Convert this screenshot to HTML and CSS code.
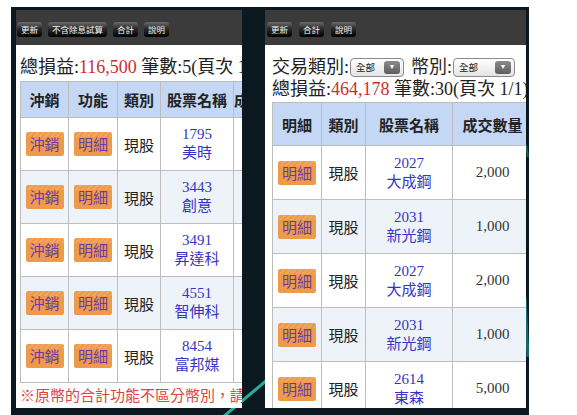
FILE: index.html
```html
<!DOCTYPE html>
<html lang="zh-Hant">
<head>
    <meta charset="UTF-8">
    <meta name="viewport" content="width=device-width, initial-scale=1.0">
    <title>庫存損益</title>
    <link rel="stylesheet" href="styles.css">
</head>
<body>
    <div class="stage">
        <!-- background streaks behind the two screens -->
        <svg class="backdrop" width="518" height="408" viewBox="0 0 518 408">
            <path d="M212 410 L262 368" stroke="#2fc4b0" stroke-width="3" fill="none" opacity="0.85"/>
            <path d="M514 290 L517 350" stroke="#1d8f86" stroke-width="3" fill="none" opacity="0.7"/>
            <path d="M515 138 L517 150" stroke="#1d8f86" stroke-width="2" fill="none" opacity="0.6"/>
        </svg>

        <!-- left screen -->
        <div class="panel panel-left">
            <div class="toolbar">
                <span class="tbtn">更新</span>
                <span class="tbtn">不含除息試算</span>
                <span class="tbtn">合計</span>
                <span class="tbtn">說明</span>
            </div>
            <div class="summary">總損益:<span class="red">116,500</span> 筆數:5(頁次 1/1)</div>
            <table class="grid grid-left">
                <colgroup>
                    <col style="width:48px"><col style="width:49px"><col style="width:43px"><col style="width:73px"><col style="width:60px">
                </colgroup>
                <tr class="head"><th>沖銷</th><th>功能</th><th>類別</th><th>股票名稱</th><th>成交數量</th></tr>
                <tr><td><span class="act">沖銷</span></td><td><span class="act">明細</span></td><td>現股</td><td class="stock">1795<br>美時</td><td class="qty">1,000</td></tr>
                <tr class="alt"><td><span class="act">沖銷</span></td><td><span class="act">明細</span></td><td>現股</td><td class="stock">3443<br>創意</td><td class="qty">1,000</td></tr>
                <tr><td><span class="act">沖銷</span></td><td><span class="act">明細</span></td><td>現股</td><td class="stock">3491<br>昇達科</td><td class="qty">1,000</td></tr>
                <tr class="alt"><td><span class="act">沖銷</span></td><td><span class="act">明細</span></td><td>現股</td><td class="stock">4551<br>智伸科</td><td class="qty">1,000</td></tr>
                <tr><td><span class="act">沖銷</span></td><td><span class="act">明細</span></td><td>現股</td><td class="stock">8454<br>富邦媒</td><td class="qty">1,000</td></tr>
            </table>
            <div class="note">※原幣的合計功能不區分幣別，請注意</div>
        </div>

        <!-- right screen -->
        <div class="panel panel-right">
            <div class="toolbar">
                <span class="tbtn">更新</span>
                <span class="tbtn">合計</span>
                <span class="tbtn">說明</span>
            </div>
            <div class="filters">
                交易類別:<span class="pick pick-a"><span class="pick-text">全部</span><span class="pick-arrow">&#9660;</span></span>
                幣別:<span class="pick pick-b"><span class="pick-text">全部</span><span class="pick-arrow">&#9660;</span></span>
            </div>
            <div class="summary summary-right">總損益:<span class="red">464,178</span> 筆數:30(頁次 1/1)</div>
            <table class="grid grid-right">
                <colgroup>
                    <col style="width:49px"><col style="width:44px"><col style="width:87px"><col style="width:80px">
                </colgroup>
                <tr class="head"><th>明細</th><th>類別</th><th>股票名稱</th><th>成交數量</th></tr>
                <tr><td><span class="act">明細</span></td><td>現股</td><td class="stock">2027<br>大成鋼</td><td class="qty">2,000</td></tr>
                <tr class="alt"><td><span class="act">明細</span></td><td>現股</td><td class="stock">2031<br>新光鋼</td><td class="qty">1,000</td></tr>
                <tr><td><span class="act">明細</span></td><td>現股</td><td class="stock">2027<br>大成鋼</td><td class="qty">2,000</td></tr>
                <tr class="alt"><td><span class="act">明細</span></td><td>現股</td><td class="stock">2031<br>新光鋼</td><td class="qty">1,000</td></tr>
                <tr><td><span class="act">明細</span></td><td>現股</td><td class="stock">2614<br>東森</td><td class="qty">5,000</td></tr>
            </table>
        </div>
    </div>
</body>
</html>
```

FILE: styles.css
```css
body {
    margin: 0;
    padding: 0;
    background: #ffffff;
    font-family: "Liberation Serif", "Noto Sans CJK TC", serif;
    color: #222;
}

.stage {
    position: relative;
    margin: 7px 0 0 11px;
    width: 518px;
    height: 408px;
    box-sizing: border-box;
    padding: 3px 3px 0 5px;
    background: #0b1820;
    display: flex;
    gap: 23px;
    overflow: hidden;
}

.backdrop {
    position: absolute;
    left: 0;
    top: 0;
}

.panel {
    position: relative;
    height: 398px;
    background: #fff;
    overflow: hidden;
    flex: none;
}
.panel-left { width: 226px; }
.panel-right { width: 261px; }

/* top dark bar with small buttons */
.toolbar {
    height: 35px;
    box-sizing: border-box;
    background: #3b3b3b;
    display: flex;
    align-items: flex-end;
    gap: 6px;
    padding: 0 0 8px 1px;
}
.panel-right .toolbar {
    padding-left: 2px;
    gap: 7px;
}

.tbtn {
    display: inline-block;
    height: 15px;
    line-height: 15px;
    padding: 0 4px;
    border-radius: 3px;
    background: linear-gradient(180deg, #6a6a6a 0%, #2a2a2a 45%, #000 100%);
    color: #f4f4f4;
    font-family: "Noto Sans CJK TC", sans-serif;
    font-size: 8.5px;
    white-space: nowrap;
}

.summary {
    padding: 10px 0 0 4px;
    font-size: 18px;
    line-height: 24px;
    white-space: nowrap;
}
.red { color: #c8302c; }

.filters {
    padding: 10px 0 0 7px;
    height: 24px;
    font-size: 18px;
    line-height: 24px;
    white-space: nowrap;
    display: flex;
    align-items: center;
}
.summary-right {
    padding: 0 0 0 7px;
    line-height: 21px;
}

/* fake dropdowns */
.pick {
    display: inline-flex;
    align-items: center;
    justify-content: space-between;
    height: 19px;
    box-sizing: border-box;
    border: 1px solid #8a8a8a;
    border-radius: 4px;
    background: linear-gradient(180deg, #ffffff 0%, #e4e4e4 100%);
    padding: 0 3px 0 5px;
    margin: 0 7px 0 1px;
}
.pick-a { width: 54px; }
.pick-b { width: 62px; }
.pick-text {
    font-family: "Noto Sans CJK TC", sans-serif;
    font-size: 9.5px;
    color: #222;
}
.pick-arrow {
    width: 16px;
    height: 13px;
    line-height: 13px;
    border-radius: 3px;
    background: linear-gradient(180deg, #8a8a8a 0%, #5e5e5e 100%);
    color: #fff;
    font-size: 7px;
    text-align: center;
}

/* data tables */
.grid {
    table-layout: fixed;
    border-collapse: collapse;
    margin: 2px 0 0 4px;
    font-size: 15px;
}
.grid-left { width: 273px; }
.grid-right { width: 260px; margin-left: 7px; }

.grid th, .grid td {
    border: 1px solid #bdbdbd;
    text-align: center;
    padding: 0;
    white-space: nowrap;
    overflow: hidden;
}
.grid .head th {
    background: #c4d8f6;
    font-family: "Noto Sans CJK TC", sans-serif;
    font-weight: bold;
    font-size: 15px;
    color: #222;
    height: 35px;
}
.grid-right .head th { height: 42px; }

.grid td { height: 52px; }
.grid-right td { height: 53px; }
.grid .alt td { background: #eef3fa; }

.act {
    display: inline-block;
    width: 38px;
    height: 24px;
    line-height: 24px;
    border-radius: 2px;
    background:
        repeating-linear-gradient(135deg, rgba(255, 255, 255, 0.12) 0 2px, rgba(255, 255, 255, 0) 2px 4px) top / 100% 5px no-repeat,
        #ee9a4b;
    color: #6a3aa8;
    font-family: "Noto Sans CJK TC", sans-serif;
    font-size: 15px;
    vertical-align: middle;
}

.stock {
    color: #3434c4;
    line-height: 19px;
}
.qty {
    color: #333;
}

.note {
    margin: 2px 0 0 4px;
    color: #e0433d;
    font-family: "Noto Sans CJK TC", sans-serif;
    font-size: 15px;
    line-height: 20px;
    white-space: nowrap;
}
```
